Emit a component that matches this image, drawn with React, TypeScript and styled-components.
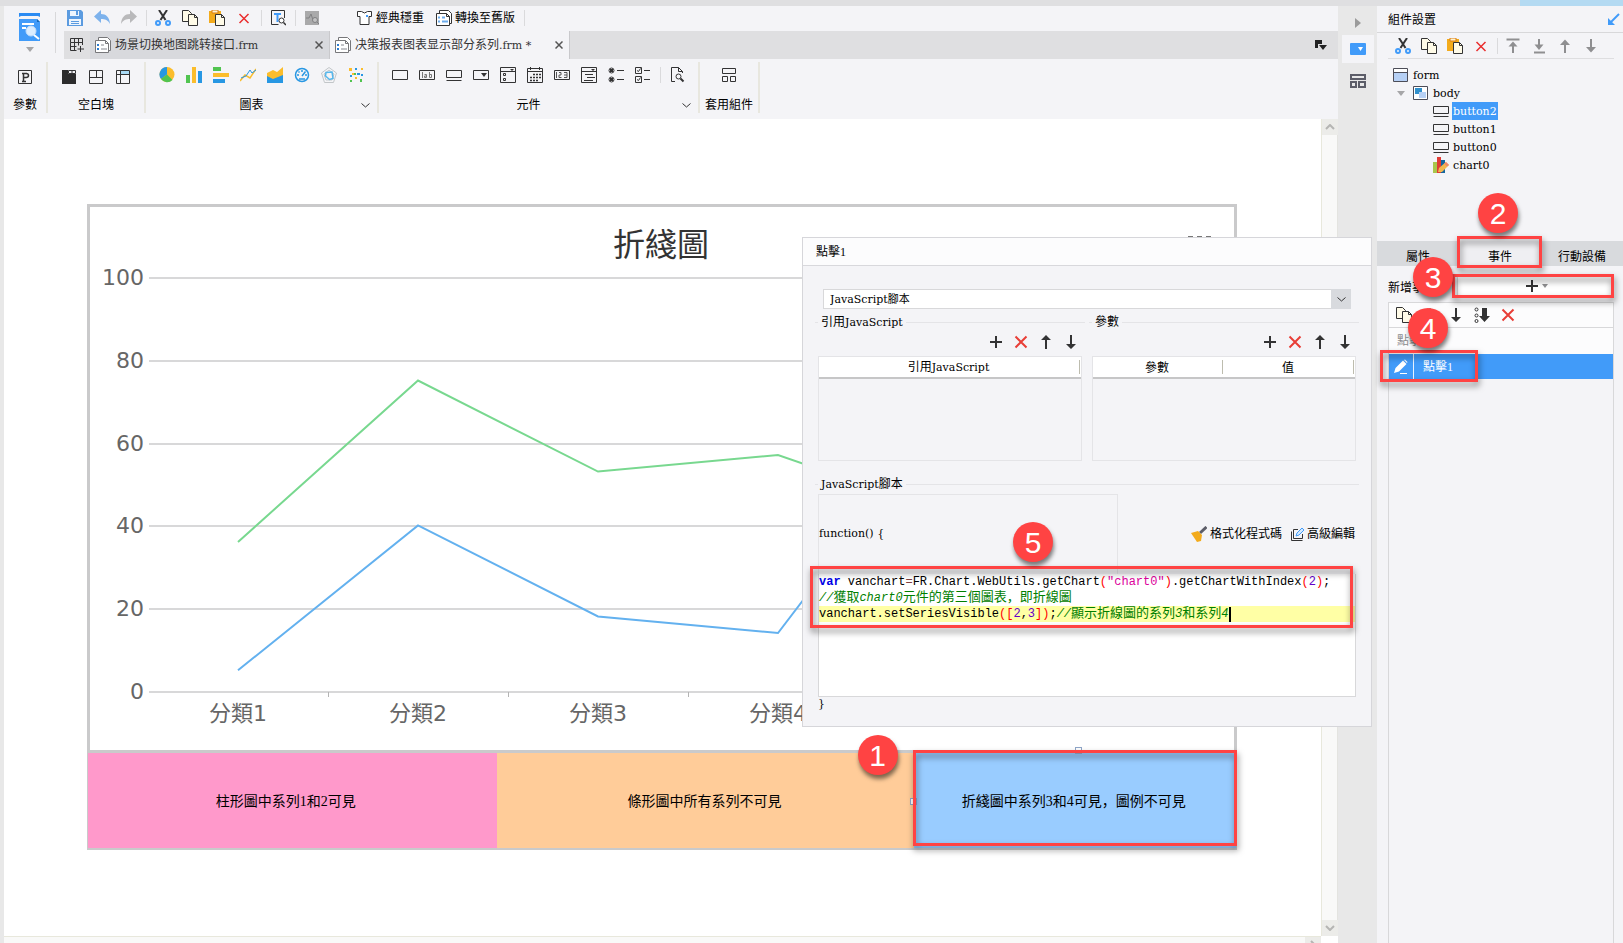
import React from "react";
import styled, { createGlobalStyle, css } from "styled-components";

const INK = "#333334";
const BLUE = "#419bf9";
const RED = "#e83e37";
const PANEL = "#f4f4f7";
const RAIL = "#e8e8e8";
const MARK = "#ff4343";

const GlobalStyle = createGlobalStyle`
  * { box-sizing: border-box; }
  body {
    margin: 0;
    overflow: hidden;
    background: ${PANEL};
    color: #000;
    font: 12px/16px "Liberation Serif", "Noto Sans CJK SC", serif;
  }
  button, select {
    margin: 0;
    padding: 0;
    border: 0;
    background: none;
    color: inherit;
    font: inherit;
  }
  svg { display: block; flex: none; }
`;

/* ---------- shell ---------- */

const Shell = styled.div`
  position: relative;
  display: flex;
  flex-direction: column;
  height: 100vh;
`;
const TopStrip = styled.div`
  display: flex;
  justify-content: flex-end;
  height: 6px;
  flex: none;
  background: #dfdfe1;
`;
const TopStripAccent = styled.div`
  width: 103px;
  background: #b4daf2;
`;
const Columns = styled.div`
  display: grid;
  grid-template-columns: 4px minmax(0, 1fr) 39px 246px;
  flex: 1;
  min-height: 0;
`;
const LeftEdge = styled.div`
  background: ${RAIL};
`;
const Main = styled.main`
  display: flex;
  flex-direction: column;
  min-width: 0;
  min-height: 0;
`;

/* ---------- header ---------- */

const Header = styled.header`
  display: flex;
  height: 53px;
  flex: none;
`;
const PreviewButton = styled.button`
  display: flex;
  flex-direction: column;
  align-items: center;
  gap: 6px;
  width: 52px;
  height: 41px;
  margin: 6px 6px 0 0;
  padding-top: 1px;
  border-right: 1px solid #d8d8da;
`;
const HeaderRows = styled.div`
  flex: 1;
  min-width: 0;
`;
const ToolRow = styled.div`
  display: flex;
  align-items: center;
  height: 25px;
  padding-bottom: 2px;
`;
const IconButton = styled.button`
  padding: 0 6px 0 5px;
`;
const ToolDivider = styled.span`
  width: 7px;
  height: 16px;
  background: linear-gradient(#dadadc, #dadadc) center / 1px 100% no-repeat;
`;
const ModeButtons = styled.div`
  display: flex;
  gap: 12px;
  margin: 0 6px 0 31px;
`;
const TextButton = styled.button`
  display: flex;
  align-items: center;
  gap: 3px;
  white-space: nowrap;
`;
const FileTabs = styled.div`
  display: flex;
  height: 28px;
  margin-left: 2px;
  background: #dfdfe1;
`;
const NewTab = styled.button`
  display: grid;
  place-items: center;
  width: 26px;
`;
const FileTab = styled.div<{ $active?: boolean }>`
  display: flex;
  align-items: center;
  gap: 4px;
  width: 240px;
  padding: 0 6px 0 5px;
  border-right: 1px solid #c9c9cc;
  background: ${(p) => (p.$active ? PANEL : "#d8d9dd")};
  color: ${INK};
`;
const FileName = styled.span`
  flex: 1;
  white-space: pre;
`;
const TabMenu = styled.button`
  margin: 0 11px 0 auto;
`;
const Latin = styled.span`
  font-family: "DejaVu Serif", serif;
  font-size: 11px;
`;

/* ---------- ribbon ---------- */

const Ribbon = styled.div`
  display: flex;
  height: 60px;
  flex: none;
  padding-top: 3px;
`;
const RibbonGroup = styled.section<{ $width: number }>`
  display: flex;
  flex-direction: column;
  justify-content: space-between;
  width: ${(p) => p.$width}px;
  height: 51px;
  padding-top: 4px;
  border-right: 2px solid #e8e7df;
`;
const RibbonIcons = styled.div<{ $centered?: boolean; $low?: boolean }>`
  display: flex;
  align-items: center;
  height: ${(p) => (p.$low ? 22 : 18)}px;
  ${(p) => (p.$centered ? "justify-content: center;" : "padding-left: 8px;")}
`;
const RibbonLabel = styled.div`
  display: flex;
  align-items: center;
  padding-right: 4px;
  span {
    flex: 1;
    text-align: center;
    white-space: nowrap;
  }
`;
const ShortLabel = styled.div`
  text-align: center;
  white-space: nowrap;
`;

/* ---------- canvas ---------- */

const Workspace = styled.div`
  display: grid;
  grid-template-columns: minmax(0, 1fr) 17px;
  grid-template-rows: minmax(0, 1fr) 7px;
  flex: 1;
  min-height: 0;
`;
const Canvas = styled.div`
  padding: 85px 84px 0 83px;
  background: #fff;
  overflow: hidden;
`;
const VScroll = styled.div`
  display: flex;
  flex-direction: column;
  justify-content: space-between;
  border-left: 1px solid #e8e8dc;
  border-right: 1px solid #e4e4e0;
  background: #f9f9f8;
`;
const HScroll = styled.div`
  display: flex;
  justify-content: space-between;
  border-top: 1px solid #e8e8dc;
  background: #f9f9f8;
  overflow: hidden;
`;
const ScrollCorner = styled.div`
  background: #fff;
`;
const ScrollButton = styled.button`
  display: grid;
  place-items: center;
  width: 16px;
  height: 16px;
  background: #ecece9;
`;
const ChartFrame = styled.div`
  border: 3px solid #cacacb;
  svg {
    width: 100%;
    height: auto;
  }
`;
const FormButtons = styled.div`
  display: grid;
  grid-template-columns: 410fr 417fr 323fr;
  height: 97px;
  border: solid #cacacb;
  border-width: 0 1px 2px;
`;
const FormButton = styled.button<{ $color: string; $shift?: boolean }>`
  padding: 2px ${(p) => (p.$shift ? 14 : 2)}px 0 0;
  background: ${(p) => p.$color};
  font-size: 14px;
  line-height: 20px;
`;
const MarkedButton = styled.div`
  position: relative;
  display: grid;
`;
const Handle = styled.i<{ $left: string; $top: string }>`
  position: absolute;
  left: ${(p) => p.$left};
  top: ${(p) => p.$top};
  width: 7px;
  height: 7px;
  border: 1px solid #8fa6c8;
  background: #fff;
`;

/* ---------- numbered marks ---------- */

const Outline = styled.div<{ $inset: string }>`
  position: absolute;
  inset: ${(p) => p.$inset};
  z-index: 3;
  border: 3px solid ${MARK};
  filter: drop-shadow(1px 4px 3px rgba(0, 0, 0, 0.5));
  pointer-events: none;
`;
const Badge = styled.div<{ $left: number; $top: number }>`
  position: absolute;
  left: ${(p) => p.$left}px;
  top: ${(p) => p.$top}px;
  z-index: 4;
  width: 40px;
  height: 40px;
  border-radius: 50%;
  background: ${MARK};
  box-shadow: 1px 4px 4px rgba(0, 0, 0, 0.5);
  color: #fff;
  font: 30px/41px "Liberation Sans", sans-serif;
  text-align: center;
`;

/* ---------- side rail ---------- */

const Rail = styled.nav`
  display: flex;
  flex-direction: column;
  align-items: center;
  padding-top: 8px;
  background: ${RAIL};
`;
const RailButton = styled.button<{ $active?: boolean }>`
  display: grid;
  place-items: center;
  width: 32px;
  height: 28px;
  ${(p) => p.$active && css`background: ${PANEL};`}
`;
const RailToggle = styled.button`
  height: 18px;
  margin-bottom: 3px;
`;
const RailSpacer = styled.div`
  height: 4px;
`;

/* ---------- property panel ---------- */

const Panel = styled.aside`
  position: relative;
  display: flex;
  flex-direction: column;
  min-height: 0;
  background: ${PANEL};
`;
const PanelTitle = styled.h2`
  display: flex;
  align-items: center;
  justify-content: space-between;
  height: 27px;
  flex: none;
  margin: 0;
  padding: 1px 3px 0 11px;
  border-bottom: 1px solid #d8d8da;
  font-size: 12px;
  font-weight: 400;
`;
const TreeTools = styled.div`
  display: flex;
  align-items: center;
  height: 26px;
  flex: none;
  margin: 0 9px 0 11px;
  padding-left: 2px;
  border-bottom: 1px solid #dedee0;
`;
const TreeTool = styled.button`
  padding: 0 5px;
`;
const TreeDivider = styled.span`
  width: 6px;
  height: 16px;
  background: linear-gradient(#dadadc, #dadadc) center / 1px 100% no-repeat;
`;
const Tree = styled.ul`
  height: 182px;
  flex: none;
  margin: 0;
  padding: 7px 0 0;
  list-style: none;
`;
const TreeRow = styled.li<{ $depth: number }>`
  display: flex;
  align-items: center;
  gap: 3px;
  height: 18px;
  padding-left: ${(p) => p.$depth * 20 + 16}px;
`;
const TreeArrow = styled.button`
  width: 17px;
  margin: 0 0 0 -20px;
  padding-left: 4px;
`;
const TreeLabel = styled.button<{ $selected?: boolean }>`
  height: 18px;
  padding: 2px 1px 0;
  font-family: "DejaVu Serif", serif;
  font-size: 11px;
  ${(p) => p.$selected && css`background: ${BLUE}; color: #fff;`}
`;
const PropTabs = styled.div`
  display: grid;
  grid-template-columns: repeat(3, 1fr);
  height: 25px;
  flex: none;
`;
const PropTab = styled.button<{ $active?: boolean }>`
  padding-top: 6px;
  background: ${(p) => (p.$active ? "#efeff2" : "#d8dadd")};
`;
const TabHolder = styled.div`
  position: relative;
  display: grid;
`;
const AddRow = styled.div`
  display: flex;
  align-items: center;
  gap: 10px;
  flex: none;
  margin: 10px 9px 0 11px;
`;
const AddLabel = styled.span`
  width: 60px;
  padding-top: 4px;
`;
const AddHolder = styled.div`
  position: relative;
  flex: 1;
  display: grid;
  margin-left: -1px;
`;
const AddButton = styled.button`
  display: flex;
  align-items: center;
  justify-content: center;
  gap: 2px;
  height: 20px;
  border: 1px solid #d8d8da;
  background: #fff;
`;
const EventList = styled.div`
  flex: 1;
  margin: 6px 9px 0 11px;
  border: 1px solid #d8d8da;
  border-bottom: 0;
`;
const EventTools = styled.div`
  display: flex;
  align-items: center;
  height: 25px;
  padding-left: 2px;
  border-bottom: 1px solid #d8d8da;
  background: #fcfcfd;
`;
const EventGroup = styled.div`
  height: 26px;
  padding: 5px 8px;
  background: #fcfcfd;
  color: #8c8c8e;
`;
const EventRow = styled.div`
  position: relative;
  display: flex;
  height: 25px;
  background: ${BLUE};
  color: #fff;
`;
const EditButton = styled.button`
  display: grid;
  place-items: center;
  width: 25px;
  border-right: 1px solid #e8f2ff;
`;
const EventName = styled.button`
  padding-left: 9px;
`;

/* ---------- dialog ---------- */

const Dialog = styled.section`
  position: absolute;
  top: 237px;
  right: 251px;
  z-index: 2;
  width: 570px;
  border: 1px solid #d6d6da;
  background: ${PANEL};
`;
const DialogTitle = styled.h2`
  height: 28px;
  margin: 0;
  padding: 6px 13px;
  border-bottom: 1px solid #d8d8dc;
  background: #fcfcfd;
  font-size: 12px;
  font-weight: 400;
`;
const DialogBody = styled.div`
  padding: 23px 12px 16px;
`;
const SelectWrap = styled.label`
  display: flex;
  height: 20px;
  margin: 0 8px 5px;
  border: 1px solid #d8d8da;
  background: #fff;
`;
const ScriptSelect = styled.select`
  flex: 1;
  min-width: 0;
  padding: 1px 0 0 6px;
  appearance: none;
  font-family: "DejaVu Serif", "Noto Sans CJK SC", serif;
  font-size: 11px;
`;
const SelectArrow = styled.span`
  display: grid;
  place-items: center;
  width: 20px;
  margin: -1px;
  background: #d8dade;
`;
const FieldColumns = styled.div`
  display: grid;
  grid-template-columns: 1fr 1fr;
  gap: 4px;
`;
const Fieldset = styled.fieldset`
  min-width: 0;
  margin: 0;
  padding: 0 3px;
  border: 0;
  border-top: 1px solid #e4e4e7;
`;
const Legend = styled.legend`
  height: 16px;
  padding: 0 3px;
`;
const TableTools = styled.div`
  display: flex;
  justify-content: flex-end;
  gap: 9px;
  margin: 4px 3px 6px;
`;
const TableBox = styled.div`
  height: 105px;
  border: 1px solid #e4e4e7;
`;
const Table = styled.table`
  width: 100%;
  border-collapse: collapse;
  table-layout: fixed;
`;
const HeadCell = styled.th`
  height: 21px;
  padding: 1px 3px 0 0;
  border-bottom: 2px solid #c6c6c7;
  background: linear-gradient(#bdbcae, #bdbcae) right 1px center / 1px 14px no-repeat, #fff;
  font-weight: 400;
`;
const ScriptField = styled(Fieldset)`
  margin-top: 15px;
`;
const ScriptTop = styled.div`
  display: flex;
  align-items: center;
  justify-content: space-between;
  height: 80px;
  margin-top: 2px;
`;
const Signature = styled.div`
  width: 300px;
  height: 80px;
  padding-top: 30px;
  border: 1px solid #e4e4e7;
  border-bottom: 0;
`;
const ScriptActions = styled.div`
  display: flex;
  gap: 8px;
  padding-right: 1px;
`;
const EditorWrap = styled.div`
  position: relative;
`;
const Editor = styled.pre`
  height: 123px;
  margin: 0;
  border: 1px solid #d8d8da;
  border-top: 0;
  background: #fff;
  font: 12px/16px "Liberation Mono", "Noto Sans CJK SC", monospace;
`;
const CodeLine = styled.div<{ $current?: boolean }>`
  display: flex;
  align-items: center;
  height: 16px;
  white-space: pre;
  ${(p) => p.$current && css`background: #ffffa5;`}
`;
const token = {
  keyword: css`color: #0000e6; font-weight: 700;`,
  operator: css`color: #804040;`,
  bracket: css`color: #ff0000;`,
  string: css`color: #dc009c;`,
  number: css`color: #6400c8;`,
  comment: css`color: #008000; font-style: italic;`,
  note: css`color: #008000; font-size: 13px;`,
};
const Tok = styled.span<{ $k: keyof typeof token }>`
  ${(p) => token[p.$k]}
`;
const Caret = styled.i`
  width: 2px;
  height: 15px;
  background: #000;
`;
const Closing = styled.div`
  line-height: 12px;
`;

/* ---------- icons ---------- */

type IconProps = { children: React.ReactNode; w?: number; h?: number; stroke?: string };
const Svg = ({ children, w = 16, h = 16, stroke = INK }: IconProps) => (
  <svg width={w} height={h} viewBox={`0 0 ${w} ${h}`} fill="none" stroke={stroke} strokeWidth="1" aria-hidden="true">
    {children}
  </svg>
);

const icons = {
  save: (
    <Svg stroke="none">
      <path d="M0 0h14l2 2v14H0z" fill="#5b9be0" />
      <path d="M3 1h9v5H3zM2 9h12v6H2z" fill="#eef5fd" />
      <path d="M9 1h2v4H9zM4 11h8v1H4zM4 13h8v1H4z" fill="#5b9be0" />
    </Svg>
  ),
  undo: (
    <Svg stroke="none"><path d="M0 6.500L7 0v4c5 0 8.500 3 9 10-2-4-5-5-9-5v4z" fill="#7db2ec" /></Svg>
  ),
  redo: (
    <Svg stroke="none"><path d="M16 6.500L9 0v4C4 4 .5 7 0 14c2-4 5-5 9-5v4z" fill="#b9b9bb" /></Svg>
  ),
  cut: (
    <Svg>
      <path d="M4 0l6.500 10M12 0L5.500 10" strokeWidth="2" />
      <circle cx="3" cy="13" r="2" stroke={BLUE} strokeWidth="2" />
      <circle cx="13" cy="13" r="2" stroke={BLUE} strokeWidth="2" />
    </Svg>
  ),
  copy: (
    <Svg>
      <path d="M.5.5h6l3 3v8h-9z" fill="#fffbe8" />
      <path d="M6.500 4.500h6l3 3v8h-9z" fill="#fffbe8" />
      <path d="M12.500 4.500v3h3" />
    </Svg>
  ),
  paste: (
    <Svg>
      <path d="M0 1h12v12H0z" fill="#f3ab1c" stroke="none" />
      <path d="M3 0h6v3H3z" fill="#fff3d0" stroke="#d87c14" />
      <path d="M6.500 4.500h6l3 3v8h-9z" fill="#fffbe8" />
      <path d="M12.500 4.500v3h3" />
    </Svg>
  ),
  remove: (
    <Svg stroke="#ea2d2d"><path d="M3.500 4l9 9M12.500 4l-9 9" strokeWidth="1.500" /></Svg>
  ),
  find: (
    <Svg>
      <path d="M14.500 8V.5H1.500v14h7" />
      <path d="M4 4h7M7.500 4v8" stroke={BLUE} strokeWidth="2" />
      <circle cx="11.500" cy="10.500" r="2.500" fill="#fff" />
      <path d="M13.500 12.500L16 15" strokeWidth="1.500" />
    </Svg>
  ),
  monitor: (
    <Svg stroke="none">
      <path d="M1 1h14v14H1z" fill="#a9a9aa" />
      <path d="M2 8h3l2-4 2 6 2-3" stroke="#808082" fill="none" />
      <circle cx="11" cy="10" r="2.500" stroke="#808082" fill="#c2c2c3" />
      <path d="M13 12l2 2" stroke="#808082" />
    </Svg>
  ),
  shirt: (
    <Svg>
      <path d="M.5 1.500h4q3 3 6 0h4v5h-2.500v8h-9v-8H.5z" fill="#fff" />
      <path d="M9 5h2v2H9z" fill={BLUE} stroke="none" />
    </Svg>
  ),
  form: (
    <Svg>
      <path d="M3.500 3V.5h9l3 3v10h-2" fill="#fff" />
      <path d="M.5 3.500h10l3 3v9H.5z" fill="#fff" />
      <path d="M10.500 3.500v3h3" />
      <path d="M2 7.500h2M2 11.500h2M6 7.500h3M6 11.500h6" stroke="#6cabec" strokeWidth="2" />
    </Svg>
  ),
  fileForm: (
    <Svg stroke="#77777a">
      <path d="M3.500 3V.5h9l3 3v10h-2" fill="#fff" />
      <path d="M.5 3.500h10l3 3v9H.5z" fill="#fff" />
      <path d="M10.500 3.500v3h3" />
      <path d="M2 8h2M2 12h2" stroke="#2c7cd0" strokeWidth="2" />
      <path d="M6 8h3M6 12h6" stroke="#c2c3c7" strokeWidth="2" />
    </Svg>
  ),
  newTab: (
    <Svg w={14} h={14}><path d="M.5.5h12v4H.5zM4.500.5v12M8.500.5v7M.5 8.500h6M.5 4.500v8h6M12.500 4v3M10.500 8v6M7.500 11h6.500" /></Svg>
  ),
  close: (
    <Svg w={8} h={8} stroke="#555"><path d="M.5.5l7 7M7.500.5l-7 7" strokeWidth="1.500" /></Svg>
  ),
  tabMenu: (
    <Svg w={12} h={10} stroke="none"><path d="M0 0h7v4H3v4H0zM4 5h8l-4 5z" fill="#222" /></Svg>
  ),
  chevron: <Svg><path d="M4.500 6.500L8.500 10l4-3.500" strokeWidth="1" /></Svg>,
  param: (
    <Svg>
      <path d="M1.500 1.500h13v13h-13z" strokeWidth="1" />
      <path d="M5 4.500h5M5 12.500h4M6.500 4v8M7 4.500h2q2.500 0 2.500 2T9 8.500H7" strokeWidth="1.500" />
    </Svg>
  ),
  blockTab: (
    <Svg stroke="none">
      <path d="M1 1h6v4h8v10H1z" fill="#2c2c2d" />
      <path d="M7.500 1.500h7v3h-7zM11 1.500v3" stroke={INK} />
    </Svg>
  ),
  blockRows: <Svg><path d="M1.500 1.500h13v13h-13zM1.500 8.500h13M8.500 1.500v7" /></Svg>,
  blockGrid: (
    <Svg><path d="M6 2h8v4H6z" fill="#a9daf5" stroke="none" /><path d="M1.500 1.500h13v13h-13zM1.500 5.500h13M5.500 1.500v13" /></Svg>
  ),
  pie: (
    <Svg stroke="none">
      <circle cx="8" cy="7.500" r="7.500" fill="#fbbd2c" />
      <path d="M8 7.500V0a7.500 7.500 0 0 0-6 12z" fill="#2797e3" />
      <path d="M8 7.500L2 12a7.500 7.500 0 0 0 11.500 1z" fill="#51c450" />
    </Svg>
  ),
  columns: (
    <Svg stroke="none"><path d="M0 8h4v8H0z" fill="#51c450" /><path d="M6 0h4v16H6z" fill="#fbbd2c" /><path d="M12 4h4v12h-4z" fill="#2797e3" /></Svg>
  ),
  bars: (
    <Svg stroke="none"><path d="M0 0h8v4H0z" fill="#51c450" /><path d="M0 6h16v4H0z" fill="#fbbd2c" /><path d="M0 12h12v4H0z" fill="#2797e3" /></Svg>
  ),
  lines: (
    <Svg><path d="M0 14l5-6 5 3 6-9" stroke="#fbbd2c" strokeWidth="1.500" /><path d="M1 11l5-2 4-6 2 3 4-3" stroke="#2797e3" /></Svg>
  ),
  area: (
    <Svg stroke="none"><path d="M0 6l6-3 4 2 6-5v14H0z" fill="#fbbd2c" /><path d="M0 9l6 3 10-4v8H0z" fill="#2797e3" /></Svg>
  ),
  gauge: (
    <Svg stroke="#2797e3">
      <circle cx="8" cy="8" r="6.500" strokeWidth="1.500" />
      <path d="M8 3v2M3 8h2M11 8h2M4.500 4.500l1 1M11.500 4.500L8 9M5 12h6" strokeWidth="1.500" />
    </Svg>
  ),
  radar: (
    <Svg stroke="#c2c6c9">
      <path d="M8 .5l7.500 5.500-3 9.500h-9L.5 6zM8 3l5 4-2 6H5L3 7z" />
      <path d="M5 5.500l6-.5 1 6.500-3.500 1-4-3.500z" stroke="#56b7ec" strokeWidth="1.500" />
    </Svg>
  ),
  scatter: (
    <Svg stroke="none">
      <path d="M1 1h3v3H1zM13 1h2v2h-2zM7 10h2v2H7zM4 6h2v2H4z" fill="#fbbd2c" />
      <path d="M7 1h2v2H7zM9 6h3v2H9zM13 7h2v2h-2zM2 8h2v2H2z" fill="#2797e3" />
      <path d="M2 13h2v2H2zM12 12h2v3h-2zM6 6h2v2H6z" fill="#51c450" />
    </Svg>
  ),
  textBox: <Svg><path d="M.5 3.500h15v9H.5z" /></Svg>,
  labelBox: (
    <Svg>
      <path d="M.5 3.500h15v9H.5z" />
      <path d="M3.500 5v6M5.500 7.500h2v3h-2v-1.500h2M10.500 5v5.500h2v-3h-2" stroke="#777" />
    </Svg>
  ),
  button: <Svg><path d="M.5 3.500h15v7H.5zM.5 13.500h15" /></Svg>,
  combo: <Svg><path d="M.5 3.500h15v9H.5z" /><path d="M8 6h6l-3 4z" fill={INK} stroke="none" /></Svg>,
  listBox: (
    <Svg><path d="M.5.5h15v15H.5zM.5 4.500h15M3.500 6.500h2v2h-2zM3.500 11.500h2v2h-2z" /><path d="M10 2h4l-2 2z" fill={INK} stroke="none" /></Svg>
  ),
  calendar: (
    <Svg><path d="M.5 1.500h15v14H.5zM.5 4.500h15M3.500 0v3M12.500 0v3" /><path d="M6 7.500h8M3 10.500h11M3 13.500h8" strokeDasharray="2 1" strokeWidth="1.500" /></Svg>
  ),
  number: (
    <Svg><path d="M.5 3.500h15v9H.5z" /><path d="M2.500 5v6M5 5.500h2v2.500H5v2.500h2.500M10 5.500h3v5h-3M10 8h3" stroke="#555" /></Svg>
  ),
  textArea: (
    <Svg><path d="M.5.5h15v15H.5zM.5 4.500h15M4 7.500h8M6 10.500h8M3 13.500h9" /><path d="M10 2h4l-2 2z" fill={INK} stroke="none" /></Svg>
  ),
  radios: (
    <Svg><circle cx="3.500" cy="3.500" r="2.500" /><circle cx="3.500" cy="12.500" r="2.500" /><path d="M9 3.500h7M9 12.500h7" /><path d="M2 3.500h3M2 12.500h3" strokeWidth="3" /></Svg>
  ),
  checks: (
    <Svg><path d="M.5.5h6v6h-6zM.5 9.500h6v6h-6zM9 3.500h6M9 12.500h6M2 3.500l1.500 1 2-3M2 12.500l1.500 1 2-3" /></Svg>
  ),
  query: (
    <Svg><path d="M13.500 6V4.500l-4-4h-7v14H6M9.500.5v4h4" /><circle cx="9.500" cy="9.500" r="2.500" /><path d="M11.500 11.500l3 3" strokeWidth="2" /></Svg>
  ),
  blocks: <Svg><path d="M1.500 1.500h13v5h-13zM1.500 9.500h5v5h-5zM9.500 9.500h5v5h-5z" /></Svg>,
  railBlocks: (
    <Svg stroke="#5c5d68"><path d="M1 2h14v4H1zM1 9h5v5H1zM9 9h6v5H9z" strokeWidth="2" /></Svg>
  ),
  railWidget: (
    <Svg h={12} stroke="none"><rect width="16" height="12" rx="1" fill={BLUE} /><path d="M8 4h5l-2.500 4z" fill="#fff" /></Svg>
  ),
  railArrow: <Svg w={6} h={10} stroke="none"><path d="M0 0l6 5-6 5z" fill="#9b9b9b" /></Svg>,
  collapse: (
    <Svg w={14} h={14} stroke={BLUE}><path d="M13 1L4 10" strokeWidth="2" /><path d="M2 5v7h7z" fill={BLUE} stroke="none" /></Svg>
  ),
  toTop: <Svg stroke="#8f8f91"><path d="M1.500 1.500h13M8 5v10" strokeWidth="2" /><path d="M3.500 8.500L8 3.500l4.500 5z" fill="#8f8f91" stroke="none" /></Svg>,
  toBottom: <Svg stroke="#8f8f91"><path d="M3 14.500h11M8 1v9" strokeWidth="2" /><path d="M3.500 6.500L8 12l4.500-5.500z" fill="#8f8f91" stroke="none" /></Svg>,
  up: <Svg stroke="#8f8f91"><path d="M8 4v11" strokeWidth="2" /><path d="M3 7l5-5.500L13 7z" fill="#8f8f91" stroke="none" /></Svg>,
  down: <Svg stroke="#8f8f91"><path d="M8 1v11" strokeWidth="2" /><path d="M3 9l5 5.500L13 9z" fill="#8f8f91" stroke="none" /></Svg>,
  upDark: <Svg stroke="none"><path d="M7 15V6H3l5-5 5 5H9v9z" fill={INK} /></Svg>,
  downDark: <Svg stroke="none"><path d="M7 1v9H3l5 5 5-5H9V1z" fill={INK} /></Svg>,
  plus: <Svg><path d="M2 8h12M8 2v12" strokeWidth="2" /></Svg>,
  cross: <Svg stroke={RED}><path d="M2.500 2.500l11 11M13.500 2.500l-11 11" strokeWidth="2" /></Svg>,
  sort: (
    <Svg><path d="M8 1h5v8h3l-5.500 6L5 9h3z" fill={INK} stroke="none" /><circle cx="2.500" cy="2.500" r="1.500" /><circle cx="2.500" cy="8.500" r="1.500" /><circle cx="2.500" cy="14" r="1.500" /></Svg>
  ),
  pencil: (
    <Svg stroke="none"><path d="M1 14l1.500-5L10 1.500 13.500 5 6 12.500zM11 1l1-.5L14.500 3l-.5 1z" fill="#fff" /><path d="M7 14.500h7" stroke="#fff" /></Svg>
  ),
  windowForm: (
    <Svg stroke="#4c4d58"><path d="M.5 1.500h14v13H.5z" fill="#fff" /><path d="M1 6h13v8H1z" fill="#b6d0f5" stroke="none" /><path d="M.5 5.500h14" /></Svg>
  ),
  body: (
    <Svg stroke="#4c4d58"><path d="M.5 1.500h14v13H.5z" fill="#fff" /><path d="M2 3h7v6H2z" fill="#3190cc" stroke="none" /><path d="M6 7h7v6H6z" fill="#b6d0f5" stroke="none" /></Svg>
  ),
  chart: (
    <Svg stroke="none"><path d="M0 5h4v11H0z" fill="#a9c64c" /><path d="M4 0h4v16H4z" fill="#e03c35" /><path d="M8 3h4v13H8z" fill="#16669e" /><path d="M5 15l1-4 7-6 3 3-7 7z" fill="#f2b84e" /><path d="M13 5l3 3-2 1.500-3-3z" fill="#f0886c" /></Svg>
  ),
  caretDown: <Svg w={8} h={5} stroke="none"><path d="M0 0h8L4 5z" fill="#a6a6a8" /></Svg>,
  smallCaret: <Svg w={6} h={4} stroke="none"><path d="M0 0h6L3 4z" fill="#8f8f91" /></Svg>,
  broom: (
    <Svg stroke="none"><path d="M15.500 1L9 7" stroke="#5c5d68" strokeWidth="3" /><path d="M0 7l7-2 4 4-1 6-4 1z" fill="#f3ab1c" /></Svg>
  ),
  edit: (
    <Svg w={14}><path d="M8 3.500H3.500v9h9V8M1.500 5.500v9h11" /><path d="M6 10l1-3 5-5 2 2-5 5z" fill="#d5e9fd" stroke={BLUE} /></Svg>
  ),
  scrollUp: <Svg w={10} h={6} stroke="#b5b5b3"><path d="M1 5l4-4 4 4" strokeWidth="2" /></Svg>,
  scrollDown: <Svg w={10} h={6} stroke="#b5b5b3"><path d="M1 1l4 4 4-4" strokeWidth="2" /></Svg>,
  scrollRight: <Svg w={6} h={10} stroke="#b5b5b3"><path d="M1 1l4 4-4 4" strokeWidth="2" /></Svg>,
  preview: (
    <Svg w={21} h={28} stroke="none">
      <path d="M0 0h21v4l-2-1H2L0 4z" fill="#2b8bf2" />
      <path d="M0 6h18l3 3v19H0z" fill={BLUE} />
      <path d="M18 6l3 3h-3z" fill="#1668b8" />
      <path d="M3 11h12M3 15h4" stroke="#fff" strokeWidth="2" />
      <circle cx="12" cy="18" r="5" fill="#dbedff" stroke="#bfdcfb" />
      <path d="M15 22l5 4" stroke="#fff" strokeWidth="2" />
    </Svg>
  ),
};
type IconName = keyof typeof icons;

const tool = (name: IconName, label: string) => (
  <IconButton key={label} aria-label={label}>{icons[name]}</IconButton>
);
const treeTool = (name: IconName, label: string) => (
  <TreeTool key={label} aria-label={label}>{icons[name]}</TreeTool>
);

/* ---------- chart ---------- */

const categories = ["分類1", "分類2", "分類3", "分類4", "分類5", "分類6"];
const series = [
  { color: "#78d88f", values: [36, 75, 53, 57, 42, 60] },
  { color: "#63b1ef", values: [5, 40, 18, 14, 71, 50] },
];
const chartX = (i: number) => 148 + i * 180;
const chartY = (v: number) => 484 - v * 4.14;

const LineChart = () => (
  <svg viewBox="0 0 1144 543" role="img" aria-label="折綫圖" fontFamily='"DejaVu Sans", "Noto Sans CJK SC", sans-serif' fontSize="22" fill="#666">
    <text x="571" y="49" fontSize="32" textAnchor="middle" fill="#333">折綫圖</text>
    {[0, 20, 40, 60, 80, 100].map((v) => (
      <g key={v}>
        <path d={`M59 ${Math.round(chartY(v)) + 1}H1110`} stroke="#d8d8d9" strokeWidth="2" />
        <text x="54" y={chartY(v) + 8} textAnchor="end">{v}</text>
      </g>
    ))}
    {categories.map((c, i) => (
      <g key={c}>
        <path d={`M${chartX(i) + 90}.5 485v5`} stroke="#b4b4b4" />
        <text x={chartX(i)} y="514" textAnchor="middle">{c}</text>
      </g>
    ))}
    {series.map((s) => (
      <polyline
        key={s.color}
        points={s.values.map((v, i) => `${chartX(i)},${chartY(v)}`).join(" ")}
        fill="none"
        stroke={s.color}
        strokeWidth="2"
      />
    ))}
    <path d="M1098 30h5M1107 30h5M1116 30h5" stroke="#777" strokeWidth="2" />
  </svg>
);

/* ---------- sections ---------- */

const TopBar = () => (
  <Header>
    <PreviewButton aria-label="預覽">{icons.preview}{icons.caretDown}</PreviewButton>
    <HeaderRows>
      <ToolRow>
        {tool("save", "儲存")}{tool("undo", "復原")}{tool("redo", "重做")}
        <ToolDivider />
        {tool("cut", "剪下")}{tool("copy", "複製")}{tool("paste", "貼上")}{tool("remove", "刪除")}
        <ToolDivider />
        {tool("find", "尋找")}
        <ToolDivider />
        {tool("monitor", "監控")}
        <ModeButtons>
          <TextButton>{icons.shirt}經典穩重</TextButton>
          <TextButton>{icons.form}轉換至舊版</TextButton>
        </ModeButtons>
        <ToolDivider />
      </ToolRow>
      <FileTabs>
        <NewTab aria-label="新增">{icons.newTab}</NewTab>
        <FileTab>
          {icons.fileForm}
          <FileName>场景切换地图跳转接口<Latin>.frm</Latin></FileName>
          <button aria-label="關閉">{icons.close}</button>
        </FileTab>
        <FileTab $active>
          {icons.fileForm}
          <FileName>决策报表图表显示部分系列<Latin>.frm *</Latin></FileName>
          <button aria-label="關閉">{icons.close}</button>
        </FileTab>
        <TabMenu aria-label="分頁清單">{icons.tabMenu}</TabMenu>
      </FileTabs>
    </HeaderRows>
  </Header>
);

const WidgetRibbon = () => (
  <Ribbon>
    <RibbonGroup $width={44}>
      <RibbonIcons $centered $low>{tool("param", "參數面板")}</RibbonIcons>
      <ShortLabel>參數</ShortLabel>
    </RibbonGroup>
    <RibbonGroup $width={98}>
      <RibbonIcons $low>{tool("blockTab", "分頁塊")}{tool("blockRows", "報表塊")}{tool("blockGrid", "絕對畫布塊")}</RibbonIcons>
      <ShortLabel>空白塊</ShortLabel>
    </RibbonGroup>
    <RibbonGroup $width={233}>
      <RibbonIcons>
        {tool("pie", "圓餅圖")}{tool("columns", "柱形圖")}{tool("bars", "條形圖")}{tool("lines", "折線圖")}
        {tool("area", "面積圖")}{tool("gauge", "儀表板")}{tool("radar", "雷達圖")}{tool("scatter", "散點圖")}
      </RibbonIcons>
      <RibbonLabel><span>圖表</span><button aria-label="更多圖表">{icons.chevron}</button></RibbonLabel>
    </RibbonGroup>
    <RibbonGroup $width={321}>
      <RibbonIcons>
        {tool("textBox", "文字框")}{tool("labelBox", "標籤")}{tool("button", "按鈕")}{tool("combo", "下拉框")}
        {tool("listBox", "下拉複選框")}{tool("calendar", "日期")}{tool("number", "數字")}{tool("textArea", "文字域")}
        {tool("radios", "單選")}{tool("checks", "複選")}
        <ToolDivider />
        {tool("query", "查詢")}
      </RibbonIcons>
      <RibbonLabel><span>元件</span><button aria-label="更多元件">{icons.chevron}</button></RibbonLabel>
    </RibbonGroup>
    <RibbonGroup $width={60}>
      <RibbonIcons $centered>{tool("blocks", "組件庫")}</RibbonIcons>
      <ShortLabel>套用組件</ShortLabel>
    </RibbonGroup>
  </Ribbon>
);

const DesignArea = () => (
  <Workspace>
    <Canvas>
      <ChartFrame><LineChart /></ChartFrame>
      <FormButtons>
        <FormButton $color="#ff99cb" $shift>柱形圖中系列1和2可見</FormButton>
        <FormButton $color="#ffcc99">條形圖中所有系列不可見</FormButton>
        <MarkedButton>
          <FormButton $color="#99ccff">折綫圖中系列3和4可見，圖例不可見</FormButton>
          <Handle $left="50%" $top="-6px" />
          <Handle $left="-4px" $top="45px" />
          <Outline $inset="-3px -1px 2px -1px" />
          <Badge $left={-56} $top={-18}>1</Badge>
        </MarkedButton>
      </FormButtons>
    </Canvas>
    <VScroll>
      <ScrollButton aria-label="向上捲動">{icons.scrollUp}</ScrollButton>
      <ScrollButton aria-label="向下捲動">{icons.scrollDown}</ScrollButton>
    </VScroll>
    <HScroll>
      <span />
      <ScrollButton aria-label="向右捲動">{icons.scrollRight}</ScrollButton>
    </HScroll>
    <ScrollCorner />
  </Workspace>
);

const widgets: { icon: IconName; name: string; selected?: boolean }[] = [
  { icon: "button", name: "button2", selected: true },
  { icon: "button", name: "button1" },
  { icon: "button", name: "button0" },
  { icon: "chart", name: "chart0" },
];

const PropertyPanel = () => (
  <Panel>
    <PanelTitle>組件設置<button aria-label="收合">{icons.collapse}</button></PanelTitle>
    <TreeTools>
      {treeTool("cut", "剪下")}{treeTool("copy", "複製")}{treeTool("paste", "貼上")}{treeTool("remove", "刪除")}
      <TreeDivider />
      {treeTool("toTop", "置頂")}{treeTool("toBottom", "置底")}{treeTool("up", "上移")}{treeTool("down", "下移")}
    </TreeTools>
    <Tree>
      <TreeRow $depth={0}>{icons.windowForm}<TreeLabel>form</TreeLabel></TreeRow>
      <TreeRow $depth={1}>
        <TreeArrow aria-label="收合 body">{icons.caretDown}</TreeArrow>
        {icons.body}
        <TreeLabel>body</TreeLabel>
      </TreeRow>
      {widgets.map((w) => (
        <TreeRow key={w.name} $depth={2}>{icons[w.icon]}<TreeLabel $selected={w.selected}>{w.name}</TreeLabel></TreeRow>
      ))}
    </Tree>
    <PropTabs>
      <PropTab>屬性</PropTab>
      <TabHolder>
        <PropTab $active>事件</PropTab>
        <Outline $inset="-5px -1px -2px -2px" />
        <Badge $left={19} $top={-48}>2</Badge>
      </TabHolder>
      <PropTab>行動設備</PropTab>
    </PropTabs>
    <AddRow>
      <AddLabel>新增事件</AddLabel>
      <AddHolder>
        <AddButton aria-label="新增事件">{icons.plus}{icons.smallCaret}</AddButton>
        <Outline $inset="-2px 0 -2px -5px" />
        <Badge $left={-44} $top={-19}>3</Badge>
      </AddHolder>
    </AddRow>
    <EventList>
      <EventTools>
        {treeTool("copy", "複製事件")}{treeTool("upDark", "上移事件")}{treeTool("downDark", "下移事件")}
        {treeTool("sort", "排序")}{treeTool("cross", "刪除事件")}
      </EventTools>
      <EventGroup>點擊</EventGroup>
      <EventRow>
        <EditButton aria-label="編輯">{icons.pencil}</EditButton>
        <EventName>點擊1</EventName>
        <Outline $inset="-4px 135px -3px -9px" />
        <Badge $left={19} $top={-46}>4</Badge>
      </EventRow>
    </EventList>
  </Panel>
);

const ListTools = () => (
  <TableTools>
    <button type="button" aria-label="新增">{icons.plus}</button>
    <button type="button" aria-label="刪除">{icons.cross}</button>
    <button type="button" aria-label="上移">{icons.upDark}</button>
    <button type="button" aria-label="下移">{icons.downDark}</button>
  </TableTools>
);

const EventDialog = () => (
  <Dialog role="dialog" aria-labelledby="event-title">
    <DialogTitle id="event-title">點擊1</DialogTitle>
    <DialogBody>
      <SelectWrap>
        <ScriptSelect aria-label="事件類型"><option>JavaScript腳本</option></ScriptSelect>
        <SelectArrow>{icons.chevron}</SelectArrow>
      </SelectWrap>
      <FieldColumns>
        <Fieldset>
          <Legend>引用<Latin>JavaScript</Latin></Legend>
          <ListTools />
          <TableBox>
            <Table><thead><tr><HeadCell scope="col">引用<Latin>JavaScript</Latin></HeadCell></tr></thead></Table>
          </TableBox>
        </Fieldset>
        <Fieldset>
          <Legend>參數</Legend>
          <ListTools />
          <TableBox>
            <Table><thead><tr><HeadCell scope="col">參數</HeadCell><HeadCell scope="col">值</HeadCell></tr></thead></Table>
          </TableBox>
        </Fieldset>
      </FieldColumns>
      <ScriptField>
        <Legend><Latin>JavaScript</Latin>腳本</Legend>
        <ScriptTop>
          <Signature><Latin>function() {"{"}</Latin></Signature>
          <ScriptActions>
            <TextButton type="button">{icons.broom}格式化程式碼</TextButton>
            <TextButton type="button">{icons.edit}高級編輯</TextButton>
          </ScriptActions>
        </ScriptTop>
        <EditorWrap>
          <Editor role="textbox" aria-multiline="true" aria-label="JavaScript腳本" tabIndex={0}>
            <CodeLine>
              <Tok $k="keyword">var</Tok> vanchart<Tok $k="operator">=</Tok>FR.Chart.WebUtils.getChart<Tok $k="bracket">(</Tok>
              <Tok $k="string">"chart0"</Tok><Tok $k="bracket">)</Tok>.getChartWithIndex<Tok $k="bracket">(</Tok>
              <Tok $k="number">2</Tok><Tok $k="bracket">)</Tok>;
            </CodeLine>
            <CodeLine>
              <Tok $k="comment">//</Tok><Tok $k="note">獲取</Tok><Tok $k="comment">chart0</Tok>
              <Tok $k="note">元件的第三個圖表，即折線圖</Tok>
            </CodeLine>
            <CodeLine $current>
              vanchart.setSeriesVisible<Tok $k="bracket">([</Tok><Tok $k="number">2</Tok>,<Tok $k="number">3</Tok>
              <Tok $k="bracket">])</Tok>;<Tok $k="comment">//</Tok><Tok $k="note">顯示折線圖的系列</Tok>
              <Tok $k="comment">3</Tok><Tok $k="note">和系列</Tok><Tok $k="comment">4</Tok><Caret />
            </CodeLine>
          </Editor>
          <Outline $inset="-8px 3px 69px -8px" />
          <Badge $left={195} $top={-52}>5</Badge>
        </EditorWrap>
        <Closing><Latin>{"}"}</Latin></Closing>
      </ScriptField>
    </DialogBody>
  </Dialog>
);

export default function App() {
  return (
    <Shell>
      <GlobalStyle />
      <TopStrip><TopStripAccent /></TopStrip>
      <Columns>
        <LeftEdge />
        <Main>
          <TopBar />
          <WidgetRibbon />
          <DesignArea />
        </Main>
        <Rail>
          <RailToggle aria-label="展開">{icons.railArrow}</RailToggle>
          <RailButton $active aria-label="元件">{icons.railWidget}</RailButton>
          <RailSpacer />
          <RailButton aria-label="組件">{icons.railBlocks}</RailButton>
        </Rail>
        <PropertyPanel />
      </Columns>
      <EventDialog />
    </Shell>
  );
}
